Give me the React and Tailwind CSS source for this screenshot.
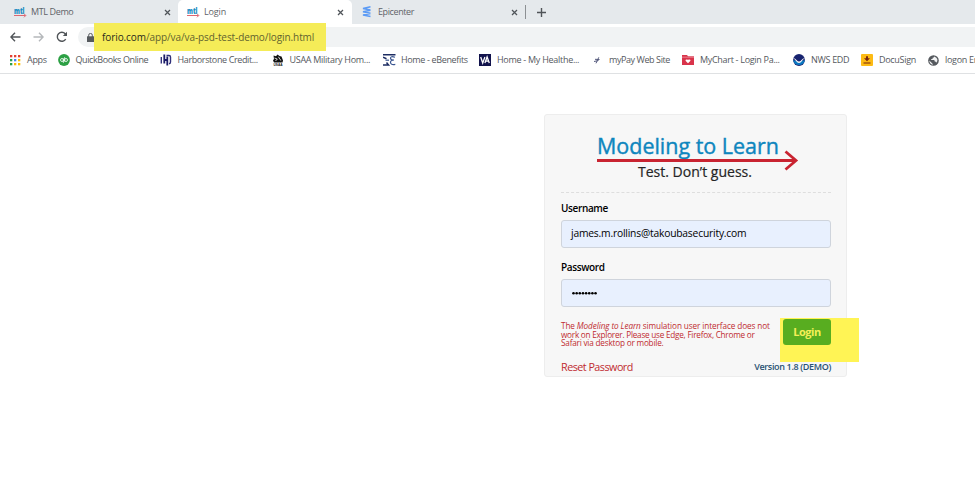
import React from "react";

function Mtl() {
  return (
    <svg className="h-3 w-[13px] shrink-0" viewBox="0 0 13 12">
      <text x="0" y="8" fontSize="8.5" fontWeight="800" fontFamily="Open Sans, sans-serif" fill="#168bc2" textLength="10.5" lengthAdjust="spacingAndGlyphs">mtl</text>
      <path d="M0 9.5h11.5M10 7.7l1.8 1.8L10 11.3" fill="none" stroke="#dc6670" strokeWidth="1" />
    </svg>
  );
}

function Close() {
  return (
    <svg className="h-[7px] w-[7px] shrink-0" viewBox="0 0 7 7">
      <path d="M1 1l5 5M6 1L1 6" stroke="#50555a" strokeWidth="1.25" />
    </svg>
  );
}

const icon = "h-3 w-3 shrink-0";

function AppsIcon() {
  const colors = ["#e34133", "#e34133", "#e34133", "#2b9e4b", "#4285f4", "#fbbc05", "#2b9e4b", "#fbbc05", "#fbbc05"];
  return (
    <svg className={icon} viewBox="0 0 12 12">
      {colors.map((c, i) => (
        <rect key={i} x={(i % 3) * 4} y={1 + Math.floor(i / 3) * 4} width="2.3" height="2.3" fill={c} />
      ))}
    </svg>
  );
}

function QuickBooksIcon() {
  return (
    <svg className={icon} viewBox="0 0 12 12">
      <circle cx="6" cy="6" r="5.9" fill="#2ca044" />
      <circle cx="4" cy="6" r="1.5" fill="none" stroke="#fff" strokeWidth=".8" />
      <circle cx="8" cy="6" r="1.5" fill="none" stroke="#fff" strokeWidth=".8" />
      <path d="M5.4 4.4v4.4M6.6 7.6V3.2" stroke="#fff" strokeWidth=".8" />
    </svg>
  );
}

function HarborIcon() {
  return (
    <svg className={icon} viewBox="0 0 12 12">
      <path d="M4.3 .5v9M7.3 2.5v9M4 6h3.500" stroke="#1b1b68" strokeWidth="1.8" fill="none" />
      <path d="M1.3 3v6.500M6.500 1.500h2.500q1.500 0 1.500 1.500V8q0 1.500-1.500 1.800" stroke="#30307a" strokeWidth="1.4" fill="none" />
    </svg>
  );
}

function UsaaIcon() {
  return (
    <svg className={icon} viewBox="0 0 12 12">
      <path d="M1.5 1.5l2.5.8L5.5.5l2 1.5 2 .5 1.5 4-.5 2H2L1 6.5l1-1.5z" fill="#111" />
      <path d="M2.500 4l2.8 1L3.500 7M6.5 2.8L8 5.5l1.2 1" stroke="#fff" strokeWidth=".8" fill="none" />
      <text x="1.5" y="12" fontSize="4" fontWeight="900" fontFamily="Liberation Sans, sans-serif" fill="#111" textLength="9" lengthAdjust="spacingAndGlyphs">USAA</text>
    </svg>
  );
}

function BenefitsIcon() {
  return (
    <svg className="h-3 w-[13px] shrink-0" viewBox="0 0 13 12">
      <path d="M0 .8h12.5M0 3.200l3.500 1.500M0 11h5.500L3.500 8.600" stroke="#1d2c62" strokeWidth="1.5" fill="none" />
      <path d="M12 3.3Q7.500 1.800 7.500 4.2q0 1.8 3.500 1.8-3.500 0-3.500 2.3 0 3 4.800 2" stroke="#3c5791" strokeWidth="1.2" fill="none" />
      <path d="M2.500 6.200h3.500" stroke="#3c5791" strokeWidth="1.2" />
    </svg>
  );
}

function VaIcon() {
  return (
    <svg className={icon} viewBox="0 0 12 12">
      <rect width="12" height="12" fill="#12134c" />
      <path d="M1.7 3l2 6 2.2-6M5.9 9l2.2-6 2.2 6M7 7.2h2.4" stroke="#fff" strokeWidth="1.3" fill="none" />
    </svg>
  );
}

function PayIcon() {
  return (
    <svg className={icon} viewBox="0 0 12 12">
      <path d="M1 7.500l4.500-1M2 5.300l4.500.2M3 9.300l2.800-6" stroke="#555a7d" strokeWidth="1" fill="none" />
    </svg>
  );
}

function ChartIcon() {
  return (
    <svg className={icon} viewBox="0 0 12 12">
      <path d="M0 1h5l1 1.2h6V11H0z" fill="#d9344b" />
      <path d="M0 3.2h12" stroke="#f6b3bb" strokeWidth=".6" />
      <path d="M6 9.2L3.5 6.7Q3.5 4.7 6 5.8q2.5-1.1 2.5.9z" fill="#fff" />
    </svg>
  );
}

function NoaaIcon() {
  return (
    <svg className={icon} viewBox="0 0 12 12">
      <circle cx="6" cy="6" r="5.9" fill="#17236f" />
      <path d="M.2 6.2Q4 6 6 9q2-3 5.8-2.8A5.9 5.9 0 0 1 .2 6.2" fill="#0c7ac2" />
      <path d="M.3 4.2Q2 4 3.5 5.900 4.8 7.500 6 7.500q1.2 0 2.5-1.600 1.5-1.900 3.2-1.700Q10 5.5 9 7 7.5 9 6 9T3 7Q2 5.500.3 4.200z" fill="#fff" />
    </svg>
  );
}

function DocuIcon() {
  return (
    <svg className={icon} viewBox="0 0 12 12">
      <rect width="12" height="12" rx="1" fill="#fdbb14" />
      <path d="M5 2.3h2v2h2L6 7.3l-3-3h2zM2.5 8.5h7v1h-7z" fill="#78250d" />
    </svg>
  );
}

function GlobeIcon() {
  return (
    <svg className="h-[11px] w-[11px] shrink-0" viewBox="0 0 12 12">
      <circle cx="6" cy="6" r="5.8" fill="#55595e" />
      <path d="M7 1.5q-.5 1.5-2 1.5v1.3H3.5v1.2h3q1 .2.8 1.7 1.5-.2 1.5 1.3 1.6-1.2 1.5-3.2Q10 3 7 1.5zM1.4 6l2.8 2.6q0 .9 1 .9v1.1Q1.6 9.8 1.4 6z" fill="#f2f3f4" />
    </svg>
  );
}

const bookmarks = [
  { Icon: AppsIcon, label: "Apps", box: "w-[48px] gap-[5px]", text: "tracking-[-0.3px]" },
  { Icon: QuickBooksIcon, label: "QuickBooks Online", box: "w-[102px] gap-[5.5px]", text: "tracking-[-0.4px]" },
  { Icon: HarborIcon, label: "Harborstone Credit...", box: "w-[112px] gap-[5.5px]", text: "tracking-[-0.38px]" },
  { Icon: UsaaIcon, label: "USAA Military Hom...", box: "w-[111px] gap-[5.5px]", text: "tracking-[-0.29px]" },
  { Icon: BenefitsIcon, label: "Home - eBenefits", box: "w-[96px] gap-[5px]", text: "tracking-[-0.35px]" },
  { Icon: VaIcon, label: "Home - My Healthe...", box: "w-[114px] gap-[6px]", text: "tracking-[-0.28px]" },
  { Icon: PayIcon, label: "myPay Web Site", box: "w-[89px] gap-[4px]", text: "tracking-[-0.42px]" },
  { Icon: ChartIcon, label: "MyChart - Login Pa...", box: "w-[111px] gap-[6px]", text: "tracking-[-0.3px]" },
  { Icon: NoaaIcon, label: "NWS EDD", box: "w-[68px] gap-[6px]", text: "tracking-[-0.3px]" },
  { Icon: DocuIcon, label: "DocuSign", box: "w-[67px] gap-[6px]", text: "tracking-[-0.3px]" },
  { Icon: GlobeIcon, label: "logon Email", box: "w-[80px] gap-[6px]", text: "tracking-[-0.3px]" },
];

function TabBar() {
  return (
    <div className="flex h-6 items-center bg-[#e5e9ec] text-[9px] text-[#5f6368]">
      <div className="flex h-6 w-[178px] items-center pl-[14px] pr-[7px]">
        <Mtl />
        <span className="ml-1 flex-1 tracking-[-0.38px]">MTL Demo</span>
        <Close />
      </div>
      <div className="flex h-6 w-[174px] items-center rounded-t-[5px] bg-white pl-[9px] pr-[8px]">
        <Mtl />
        <span className="ml-1 flex-1 tracking-[-0.15px]">Login</span>
        <Close />
      </div>
      <div className="flex h-6 w-[173px] items-center pl-[9px] pr-[7px]">
        <svg className="h-3 w-[11px]" viewBox="0 0 11 12">
          <path d="M9.5.8L2 2.6l7.5 1.4M9.5 4.3L2 5.8l7.5 1.4M9.5 7.5L2 8.9l7.5 1.6" fill="none" stroke="#5c9bf5" strokeWidth="1.5" />
        </svg>
        <span className="ml-[6px] flex-1 tracking-[-0.4px]">Epicenter</span>
        <Close />
      </div>
      <div className="h-[14px] w-px bg-[#8c9093]" />
      <svg className="ml-[11px] h-[9px] w-[9px]" viewBox="0 0 9 9">
        <path d="M4.5 0v9M0 4.5h9" stroke="#505458" strokeWidth="1.4" />
      </svg>
    </div>
  );
}

function Toolbar() {
  return (
    <div className="flex h-[26px] items-center pl-[10px]">
      <svg className="h-[10px] w-[11px]" viewBox="0 0 11 10">
        <path d="M10.5 5H1M5 .8L.9 5 5 9.2" fill="none" stroke="#505458" strokeWidth="1.4" />
      </svg>
      <svg className="ml-3 h-[10px] w-[11px]" viewBox="0 0 11 10">
        <path d="M.5 5H10M6 .8L10.1 5 6 9.2" fill="none" stroke="#b5b8bb" strokeWidth="1.4" />
      </svg>
      <svg className="ml-3 h-[12px] w-[12px]" viewBox="0 0 12 12">
        <path d="M9.7 8.1A4.5 4.5 0 1 1 9.2 2.8L10.5 4" fill="none" stroke="#505458" strokeWidth="1.4" />
        <path d="M11 .8V5H6.8z" fill="#505458" />
      </svg>
      <div className="relative ml-[10px] flex h-5 flex-1 items-center rounded-l-full bg-[#f1f3f4] pl-[9px]">
        <svg className="h-[9px] w-[7px]" viewBox="0 0 7 9">
          <path d="M0 3.3h7V9H0z" fill="#55595d" />
          <path d="M1.7 4V2.2a1.8 1.8 0 0 1 3.6 0V4" fill="none" stroke="#55595d" />
        </svg>
        <div className="absolute left-[16px] top-[-4px] h-[28px] w-[232px] bg-[#f5ec58]" />
        <span className="relative ml-[8px] whitespace-nowrap text-[10px] tracking-[-0.09px] text-[#62632f]">
          <span className="text-[#29291c]">forio.com</span>/app/va/va-psd-test-demo/login.html
        </span>
      </div>
    </div>
  );
}

function Logo() {
  return (
    <svg className="ml-9 block h-[52px] w-[202px] overflow-visible" viewBox="0 0 202 52" fontFamily="Open Sans, Noto Sans, sans-serif">
      <text x="0" y="21.700" fontSize="22" fontWeight="500" fill="#0e86be" stroke="#0e86be" strokeWidth=".4" textLength="182" lengthAdjust="spacingAndGlyphs">Modeling to Learn</text>
      <path d="M0 28.5h199M188.5 19.5l10.5 9-10.5 9" fill="none" stroke="#c92431" strokeWidth="2.8" />
      <text x="41" y="45" fontSize="14" fontWeight="500" fill="#252525" stroke="#252525" strokeWidth=".2" textLength="114" lengthAdjust="spacingAndGlyphs">Test. Don’t guess.</text>
    </svg>
  );
}

function LoginCard() {
  return (
    <main className="ml-[544px] mt-[40px] h-[263px] w-[303px] rounded-[3px] border border-[#ededed] bg-[#f7f7f7] pl-4 pr-[15px] pt-[17px] text-black">
      <Logo />
      <div className="mt-[8px] border-t border-dashed border-[#dedede]" />
      <div className="mt-[8px] h-[15px] text-[10px] font-semibold leading-[15px] tracking-[-0.36px]">Username</div>
      <div className="mt-[4px] flex h-[28px] items-center rounded-[3px] border border-[#cfd4dc] bg-[#e8f0fe] pl-[9px] text-[10.3px] font-medium tracking-[-0.2px]">
        james.m.rollins@takoubasecurity.com
      </div>
      <div className="mt-[12px] h-[15px] text-[10px] font-semibold leading-[15px] tracking-[-0.36px]">Password</div>
      <div className="mt-[4px] flex h-[28px] items-center rounded-[3px] border border-[#cfd4dc] bg-[#e8f0fe] pl-[10px]">
        <svg className="h-[4px] w-[26px]" viewBox="0 0 26 4">
          {Array.from({ length: 8 }, (_, i) => (
            <circle key={i} cx={1.5 + i * 3.15} cy="2.3" r="1.3" fill="#000" />
          ))}
        </svg>
      </div>
      <div className="mt-[12px] flex h-[27px] justify-between">
        <p className="mt-[3px] whitespace-nowrap text-[8.2px] leading-[8.7px] text-[#c02b30]">
          <span className="block tracking-[-0.1px]">The <em>Modeling to Learn</em> simulation user interface does not</span>
          <span className="block tracking-[-0.24px]">work on Explorer. Please use Edge, Firefox, Chrome or</span>
          <span className="block tracking-[-0.2px]">Safari via desktop or mobile.</span>
        </p>
        <div className="relative h-[26px] w-[48px]">
          <div className="absolute left-[-3px] top-[-1px] h-[44px] w-[79px] bg-[#fff455]" />
          <button className="relative flex h-[26px] w-[48px] items-center justify-center rounded-[3px] bg-[#58ad20] text-[11px] font-bold tracking-[-0.5px] text-[#f4ef58]">Login</button>
        </div>
      </div>
      <div className="mt-[13px] flex h-[17px] items-center justify-between">
        <span className="text-[10.8px] tracking-[-0.53px] text-[#c02b30]">Reset Password</span>
        <span className="pb-[2px] text-[9px] font-semibold tracking-[-0.34px] text-[#285273]">Version 1.8 (DEMO)</span>
      </div>
    </main>
  );
}

export default function App() {
  return (
    <div className="h-[490px] w-[975px] overflow-hidden bg-white font-['Open_Sans','Noto_Sans',sans-serif]">
      <TabBar />
      <Toolbar />
      <div className="flex h-[24px] items-center overflow-hidden border-b border-[#dfe1e3] pb-[3px] pl-[10px] text-[9px] text-[#55595e]">
        {bookmarks.map(({ Icon, label, box, text }) => (
          <div key={label} className={`flex shrink-0 items-center whitespace-nowrap ${box}`}>
            <Icon />
            <span className={text}>{label}</span>
          </div>
        ))}
      </div>
      <LoginCard />
    </div>
  );
}
